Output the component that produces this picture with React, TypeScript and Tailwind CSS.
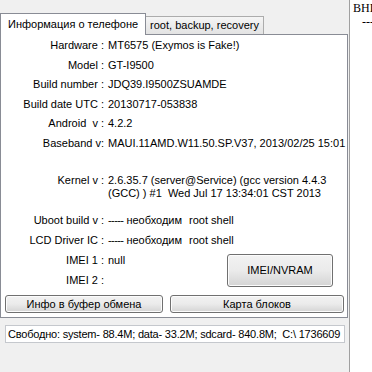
import React from "react";

const Row = ({ label, value }: { label: string; value: React.ReactNode }) => (
  <div className="flex h-[19.6px] leading-[19.6px] whitespace-nowrap">
    <div className="w-[103px] text-right whitespace-pre">{label}</div>
    <div className="ml-[4px] whitespace-pre">{value}</div>
  </div>
);

const Row20 = ({ label, value }: { label: string; value: React.ReactNode }) => (
  <div className="flex h-[20px] leading-[20px] whitespace-nowrap">
    <div className="w-[103px] text-right whitespace-pre">{label}</div>
    <div className="ml-[4px] whitespace-pre flex">{value}</div>
  </div>
);

const btn =
  "rounded-[3px] border border-[#707070] bg-gradient-to-b from-[#f2f2f2] via-[#ebebeb] to-[#d4d4d4] shadow-[inset_0_0_0_1px_#fcfcfc] flex items-center justify-center text-black";

const Needed = () => (
  <>
    <span className="block w-[81px] min-w-0 shrink-0 overflow-visible whitespace-nowrap">
      <span className="tracking-[-0.6px]">-----</span> необходим
    </span>
    <span>root shell</span>
  </>
);

export default function App() {
  return (
    <div className="w-[372px] h-[372px] bg-[#f0f0f0] flex overflow-hidden font-['Liberation_Sans',Arial,sans-serif] text-[11px] text-black">
      <div className="w-[349px] flex flex-col pt-[13px] shrink-0">
        <div className="flex items-end h-[21px]">
          <div className="relative z-10 w-[146px] h-[22px] -mb-px border border-b-0 border-[#898c95] bg-white pl-[7px] leading-[20px] whitespace-nowrap">
            Информация о телефоне
          </div>
          <div className="w-[118px] h-[18px] border border-l-0 border-b-0 border-[#acacac] bg-gradient-to-b from-[#f5f5f5] to-[#e3e3e3] text-center leading-[17px] whitespace-nowrap">
            root, backup, recovery
          </div>
        </div>
        <div className="w-[348px] h-[284px] border border-[#898c95] bg-white pt-px overflow-hidden">
          <Row label="Hardware :" value="MT6575 (Exymos is Fake!)" />
          <Row label="Model :" value="GT-I9500" />
          <Row label="Build number :" value="JDQ39.I9500ZSUAMDE" />
          <Row label="Build date UTC :" value="20130717-053838" />
          <Row label="Android  v :" value="4.2.2" />
          <Row label="Baseband v:" value="MAUI.11AMD.W11.50.SP.V37, 2013/02/25 15:01" />
          <div className="flex mt-[20px] leading-[13px] whitespace-nowrap">
            <div className="w-[103px] text-right">Kernel v :</div>
            <div className="ml-[4px] whitespace-pre">
              <div>2.6.35.7 (server@Service) (gcc version 4.4.3</div>
              <div>(GCC) ) #1  Wed Jul 17 13:34:01 CST 2013</div>
            </div>
          </div>
          <div className="mt-[10.5px]">
            <Row20 label="Uboot build v :" value={<Needed />} />
            <Row20 label="LCD Driver IC :" value={<Needed />} />
            <div className="flex">
              <div className="flex-1">
                <Row20 label="IMEI 1 :" value="null" />
                <Row20 label="IMEI 2 :" value="" />
              </div>
              <div className={btn + " w-[106px] h-[33px] mt-[4px] mr-[14px]"}>IMEI/NVRAM</div>
            </div>
          </div>
          <div className="flex mt-[5px] pl-[4px] gap-[7px]">
            <div className={btn + " w-[158px] h-[18px]"}>Инфо в буфер обмена</div>
            <div className={btn + " w-[174px] h-[18px]"}>Карта блоков</div>
          </div>
        </div>
        <div className="mt-[7px] ml-[5px] w-[340px] h-[18px] border border-[#c5c8cd] bg-white pl-[2px] leading-[16px] whitespace-pre overflow-hidden tracking-[-0.2px]">
          {"Свободно: system- 88.4M; data- 33.2M; sdcard- 840.8M;  C:\\ 1736609"}
        </div>
      </div>
      <div className="w-px bg-[#a0a0a0] shrink-0" />
      <div className="flex-1 bg-white overflow-hidden pl-[3px] pt-[1px] font-['Liberation_Serif','Times_New_Roman',serif] text-[12px] leading-[14px] whitespace-nowrap">
        <div>ВНИМАНИЕ</div>
        <div className="pl-[9px]">---</div>
      </div>
    </div>
  );
}
